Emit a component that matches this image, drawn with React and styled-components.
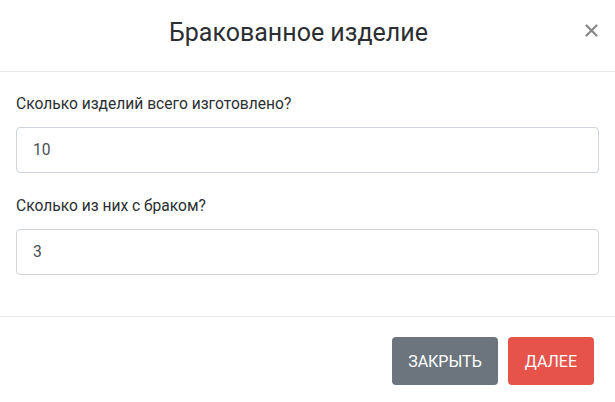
import React, { useState } from "react";
import styled, { createGlobalStyle } from "styled-components";

const GlobalStyle = createGlobalStyle`
  html, body {
    margin: 0;
    padding: 0;
    background: #fff;
  }
  body {
    font-family: Roboto, "Noto Sans", sans-serif;
    color: #212529;
  }
  * {
    box-sizing: border-box;
  }
`;

const Modal = styled.div`
  width: 615px;
  height: 402px;
  background: #fff;
  display: flex;
  flex-direction: column;
`;

const Header = styled.div`
  position: relative;
  height: 72px;
  display: flex;
  align-items: center;
  justify-content: center;
  padding-right: 18px;
  border-bottom: 1px solid #e9ecef;
`;

const Title = styled.h5`
  margin: 0;
  font-size: 25px;
  font-weight: 400;
  color: #2b2f33;
  padding-bottom: 6px;
`;

const CloseButton = styled.button`
  position: absolute;
  right: 14px;
  top: 20px;
  width: 20px;
  height: 20px;
  padding: 0;
  border: 0;
  background: transparent;
  color: #888;
  cursor: pointer;
  display: flex;
  align-items: center;
  justify-content: center;
`;

const Body = styled.div`
  padding: 22px 16px 0;
  height: 245px;
  border-bottom: 1px solid #e9ecef;
`;

const Field = styled.div`
  margin-bottom: 23px;
`;

const Label = styled.label`
  display: block;
  font-size: 15.6px;
  line-height: 20px;
  color: #2b2f33;
  margin-bottom: 13px;
`;

const Input = styled.input`
  display: block;
  width: 100%;
  height: 46px;
  padding: 0 16px;
  font-family: Roboto, "Noto Sans", sans-serif;
  font-size: 15.6px;
  color: #495057;
  background: #fff;
  border: 1px solid #ced4da;
  border-radius: 4px;
  outline: none;
`;

const Footer = styled.div`
  flex: 1;
  display: flex;
  align-items: flex-start;
  justify-content: flex-end;
  gap: 10px;
  padding: 20px 21.5px 0 0;
`;

const Button = styled.button`
  height: 48px;
  padding: 0 16.5px;
  border: 0;
  border-radius: 4px;
  font-family: Roboto, "Noto Sans", sans-serif;
  font-size: 16px;
  text-transform: uppercase;
  color: #fff;
  background: ${(p) => (p.$variant === "danger" ? "#e5534b" : "#6c757d")};
  cursor: pointer;
`;

export default function App() {
  const [total, setTotal] = useState("10");
  const [defects, setDefects] = useState("3");

  return (
    <>
      <GlobalStyle />
      <Modal>
        <Header>
          <Title>Бракованное изделие</Title>
          <CloseButton aria-label="close">
            <svg width="13" height="13" viewBox="0 0 13 13">
              <path
                d="M1.5 1.5 L11.5 11.5 M11.5 1.5 L1.5 11.5"
                stroke="currentColor"
                strokeWidth="2.2"
                strokeLinecap="round"
              />
            </svg>
          </CloseButton>
        </Header>
        <Body>
          <Field>
            <Label>Сколько изделий всего изготовлено?</Label>
            <Input value={total} onChange={(e) => setTotal(e.target.value)} />
          </Field>
          <Field>
            <Label>Сколько из них с браком?</Label>
            <Input value={defects} onChange={(e) => setDefects(e.target.value)} />
          </Field>
        </Body>
        <Footer>
          <Button>Закрыть</Button>
          <Button $variant="danger">Далее</Button>
        </Footer>
      </Modal>
    </>
  );
}
